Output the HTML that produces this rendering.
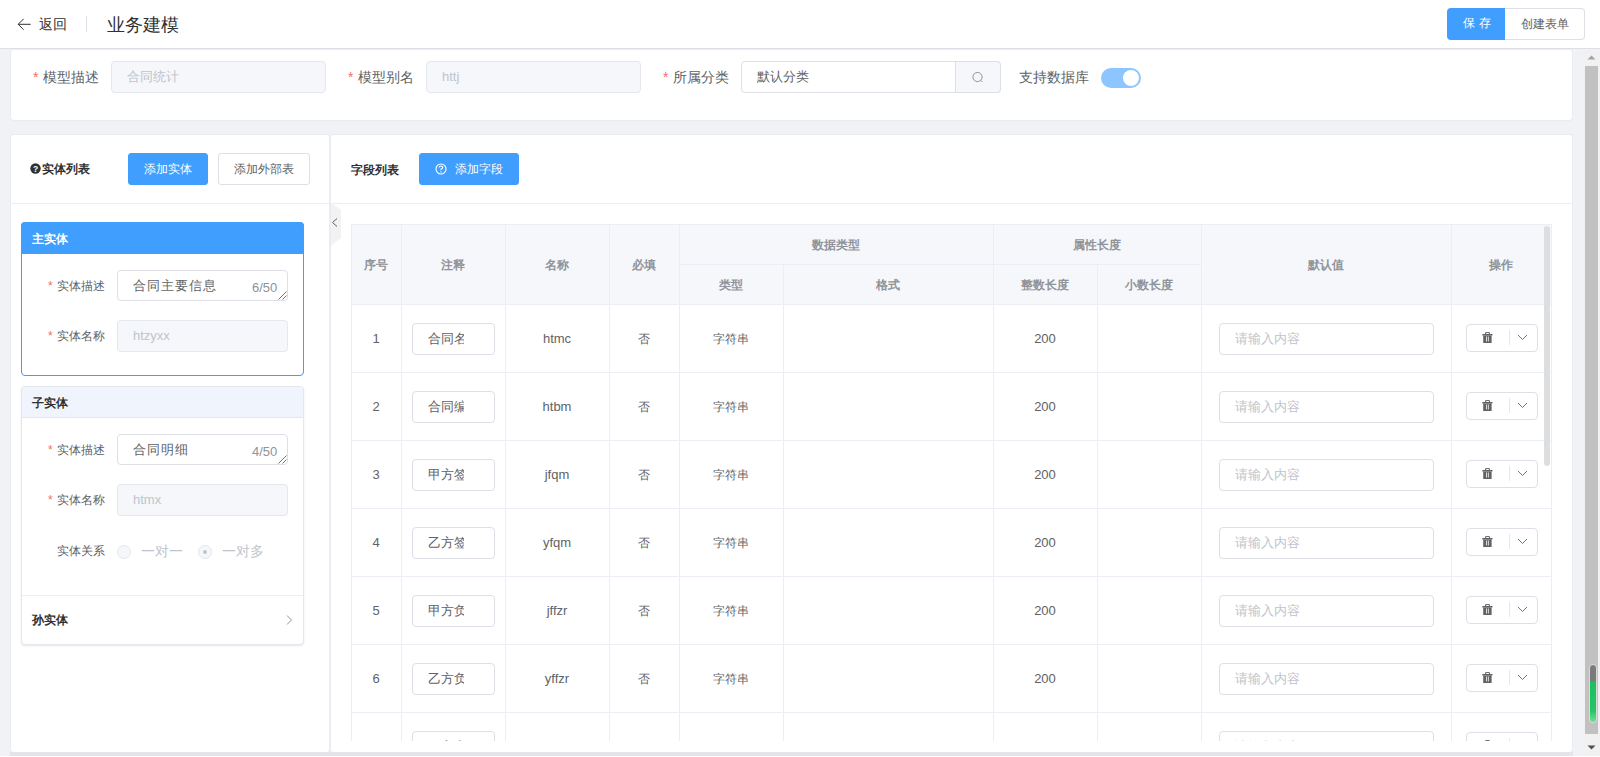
<!DOCTYPE html><html><head><meta charset="utf-8"><style>
*{box-sizing:border-box;margin:0;padding:0}
html,body{width:1600px;height:757px;overflow:hidden;background:#f0f2f5;font-family:"Liberation Sans",sans-serif;color:#606266}
.a{position:absolute}
.card{background:#fff;border-radius:3px;box-shadow:0 0 0 1px #e9ecf2}
.star{color:#f56c6c;font-size:14px;margin-right:5px}
.lbl{font-size:14px;color:#606266;white-space:nowrap;line-height:18px}
.lbs{font-size:12px;color:#606266;white-space:nowrap;line-height:16px}
.inp{border:1px solid #dcdfe6;border-radius:4px;background:#fff;height:32px;font-size:13px;line-height:30px;padding-left:15px;white-space:nowrap;overflow:hidden}
.dis{background:#f5f7fa;border-color:#e4e7ed;color:#c0c4cc}
.btn{border-radius:3px;font-size:12px;text-align:center;line-height:30px;height:32px;white-space:nowrap}
.bp{background:#409eff;color:#fff;border:1px solid #409eff}
.bd{background:#fff;color:#606266;border:1px solid #dcdfe6}
.vl{background:#ebeef5;width:1px}
.hl{background:#ebeef5;height:1px}
.th{font-size:12px;font-weight:bold;color:#909399;text-align:center;line-height:16px;white-space:nowrap}
.td{font-size:12px;color:#606266;text-align:center;line-height:16px;white-space:nowrap}
</style></head><body>
<div class="a" style="left:0;top:0;width:1600px;height:49px;background:#fff;border-bottom:1px solid #dcdfe6"></div>
<svg class="a" style="left:17px;top:18px" width="15" height="14" viewBox="0 0 15 14"><path d="M6.6 0.9L1.2 6.3L6.6 11.7M1.2 6.3H13.7" fill="none" stroke="#303133" stroke-width="1"/></svg>
<div class="a" style="left:39px;top:15px;font-size:14px;line-height:18px;color:#303133">返回</div>
<div class="a" style="left:86px;top:16px;width:1px;height:16px;background:#dcdfe6"></div>
<div class="a" style="left:107px;top:14px;font-size:18px;line-height:22px;color:#303133">业务建模</div>
<div class="a" style="left:1447px;top:8px;width:58px;height:32px;background:#409eff;border-radius:4px 0 0 4px;color:#fff;font-size:12px;line-height:31px;text-align:center;letter-spacing:4px;padding-left:5px">保存</div>
<div class="a" style="left:1505px;top:8px;width:80px;height:32px;background:#fff;border:1px solid #dcdfe6;border-left:none;border-radius:0 4px 4px 0;color:#606266;font-size:12px;line-height:30px;text-align:center">创建表单</div>
<div class="a card" style="left:11px;top:50px;width:1561px;height:70px"></div>
<div class="a lbl" style="left:33px;top:68px"><span class="star">*</span>模型描述</div>
<div class="a lbl" style="left:348px;top:68px"><span class="star">*</span>模型别名</div>
<div class="a lbl" style="left:663px;top:68px"><span class="star">*</span>所属分类</div>
<div class="a inp dis" style="left:111px;top:61px;width:215px">合同统计</div>
<div class="a inp dis" style="left:426px;top:61px;width:215px">httj</div>
<div class="a inp" style="left:741px;top:61px;width:260px;color:#606266">默认分类</div>
<div class="a" style="left:955px;top:61px;width:46px;height:32px;background:#f5f7fa;border:1px solid #dcdfe6;border-radius:0 4px 4px 0"></div>
<svg class="a" style="left:971px;top:71px" width="14" height="14" viewBox="0 0 14 14"><circle cx="6.5" cy="6" r="4.6" fill="none" stroke="#909399" stroke-width="1"/><path d="M9.8 9.3L11.5 11" stroke="#909399" stroke-width="1"/></svg>
<div class="a lbl" style="left:1019px;top:68px">支持数据库</div>
<div class="a" style="left:1101px;top:68px;width:40px;height:20px;border-radius:10px;background:#8cc5ff"></div>
<div class="a" style="left:1123px;top:70px;width:16px;height:16px;border-radius:8px;background:#fff"></div>
<div class="a card" style="left:11px;top:135px;width:318px;height:617px"></div>
<div class="a hl" style="left:11px;top:203px;width:318px"></div>
<svg class="a" style="left:30px;top:163px" width="11" height="11" viewBox="0 0 11 11"><circle cx="5.5" cy="5.5" r="5.2" fill="#303133"/><text x="5.5" y="9" font-size="8.5" font-weight="bold" text-anchor="middle" fill="#fff" font-family="Liberation Sans">?</text></svg>
<div class="a" style="left:42px;top:161px;font-size:12px;line-height:16px;font-weight:bold;color:#303133">实体列表</div>
<div class="a btn bp" style="left:128px;top:153px;width:80px">添加实体</div>
<div class="a btn bd" style="left:218px;top:153px;width:92px">添加外部表</div>
<div class="a" style="left:21px;top:222px;width:283px;height:154px;border:1px solid #409eff;border-radius:4px;background:#fff"></div>
<div class="a" style="left:21px;top:222px;width:283px;height:32px;background:#409eff;border-radius:4px 4px 0 0"></div>
<div class="a" style="left:32px;top:231px;font-size:12px;line-height:16px;font-weight:bold;color:#fff">主实体</div>
<div class="a lbs" style="left:48px;top:278px"><span class="star" style="font-size:12px;margin-right:4px">*</span>实体描述</div>
<div class="a inp" style="left:117px;top:270px;width:171px;height:31px;color:#606266;letter-spacing:1px">合同主要信息</div>
<div class="a" style="left:252px;top:280px;font-size:13px;line-height:16px;color:#909399">6/50</div>
<svg class="a" style="left:278px;top:291px" width="9" height="9" viewBox="0 0 9 9"><path d="M0.5 8.5L8.5 0.5M4.5 8.5L8.5 4.5" stroke="#606266" stroke-width="0.9"/></svg>
<div class="a lbs" style="left:48px;top:328px"><span class="star" style="font-size:12px;margin-right:4px">*</span>实体名称</div>
<div class="a inp dis" style="left:117px;top:320px;width:171px">htzyxx</div>
<div class="a" style="left:21px;top:386px;width:283px;height:259px;border:1px solid #e4e7ed;border-radius:4px;background:#fff;box-shadow:0 1px 2px rgba(0,0,0,.1)"></div>
<div class="a" style="left:22px;top:387px;width:281px;height:31px;background:#f0f4fc;border-bottom:1px solid #e4e7ed;border-radius:3px 3px 0 0"></div>
<div class="a" style="left:32px;top:395px;font-size:12px;line-height:16px;font-weight:bold;color:#303133">子实体</div>
<div class="a lbs" style="left:48px;top:442px"><span class="star" style="font-size:12px;margin-right:4px">*</span>实体描述</div>
<div class="a inp" style="left:117px;top:434px;width:171px;height:31px;color:#606266;letter-spacing:1px">合同明细</div>
<div class="a" style="left:252px;top:444px;font-size:13px;line-height:16px;color:#909399">4/50</div>
<svg class="a" style="left:278px;top:455px" width="9" height="9" viewBox="0 0 9 9"><path d="M0.5 8.5L8.5 0.5M4.5 8.5L8.5 4.5" stroke="#606266" stroke-width="0.9"/></svg>
<div class="a lbs" style="left:48px;top:492px"><span class="star" style="font-size:12px;margin-right:4px">*</span>实体名称</div>
<div class="a inp dis" style="left:117px;top:484px;width:171px">htmx</div>
<div class="a lbs" style="left:57px;top:543px">实体关系</div>
<div class="a" style="left:117px;top:545px;width:14px;height:14px;border-radius:7px;border:1px solid #e4e7ed;background:#f5f7fa"></div>
<div class="a lbs" style="left:141px;top:543px;color:#c0c4cc;font-size:14px">一对一</div>
<div class="a" style="left:198px;top:545px;width:14px;height:14px;border-radius:7px;border:1px solid #e4e7ed;background:#f5f7fa"></div>
<div class="a" style="left:203px;top:550px;width:4px;height:4px;border-radius:2px;background:#c0c4cc"></div>
<div class="a lbs" style="left:222px;top:543px;color:#c0c4cc;font-size:14px">一对多</div>
<div class="a hl" style="left:22px;top:595px;width:281px"></div>
<div class="a" style="left:32px;top:612px;font-size:12px;line-height:16px;font-weight:bold;color:#303133">孙实体</div>
<svg class="a" style="left:285px;top:614px" width="8" height="12" viewBox="0 0 8 12"><path d="M2 1.5L6.5 6L2 10.5" fill="none" stroke="#909399" stroke-width="1"/></svg>
<div class="a card" style="left:331px;top:135px;width:1241px;height:617px"></div>
<div class="a hl" style="left:331px;top:203px;width:1241px"></div>
<div class="a" style="left:351px;top:162px;font-size:12px;line-height:16px;font-weight:bold;color:#303133">字段列表</div>
<div class="a btn bp" style="left:419px;top:153px;width:100px;padding-left:20px">添加字段</div>
<svg class="a" style="left:435px;top:163px" width="12" height="12" viewBox="0 0 12 12"><circle cx="6" cy="6" r="5" fill="none" stroke="#fff" stroke-width="1.1"/><path d="M4.3 4.6Q4.3 3 6 3Q7.7 3 7.7 4.5Q7.7 5.5 6 6.2V7.2" fill="none" stroke="#fff" stroke-width="1.1"/><circle cx="6" cy="8.9" r=".7" fill="#fff"/></svg>
<svg class="a" style="left:331px;top:203px" width="11" height="43" viewBox="0 0 11 43"><path d="M0 0L10 7V35L0 42.5Z" fill="#f2f2f2"/><path d="M6 15.5L1.5 19.5L6 23.5" fill="none" stroke="#606266" stroke-width="1"/></svg>
<div class="a" style="left:351px;top:224px;width:1201px;height:517px;overflow:hidden">
<div class="a" style="left:0;top:0;width:1200px;height:80px;background:#f5f7fa"></div>
<div class="a hl" style="left:0;top:0;width:1200px"></div>
<div class="a hl" style="left:328px;top:40px;width:522px"></div>
<div class="a hl" style="left:0;top:80px;width:1200px"></div>
<div class="a hl" style="left:0;top:148px;width:1200px"></div>
<div class="a hl" style="left:0;top:216px;width:1200px"></div>
<div class="a hl" style="left:0;top:284px;width:1200px"></div>
<div class="a hl" style="left:0;top:352px;width:1200px"></div>
<div class="a hl" style="left:0;top:420px;width:1200px"></div>
<div class="a hl" style="left:0;top:488px;width:1200px"></div>
<div class="a hl" style="left:0;top:556px;width:1200px"></div>
<div class="a vl" style="left:0px;top:0;height:517px"></div>
<div class="a vl" style="left:50px;top:0;height:517px"></div>
<div class="a vl" style="left:154px;top:0;height:517px"></div>
<div class="a vl" style="left:258px;top:0;height:517px"></div>
<div class="a vl" style="left:328px;top:0;height:517px"></div>
<div class="a vl" style="left:432px;top:40px;height:477px"></div>
<div class="a vl" style="left:642px;top:0;height:517px"></div>
<div class="a vl" style="left:746px;top:40px;height:477px"></div>
<div class="a vl" style="left:850px;top:0;height:517px"></div>
<div class="a vl" style="left:1100px;top:0;height:517px"></div>
<div class="a vl" style="left:1200px;top:0;height:517px"></div>
<div class="a th" style="left:0px;top:33px;width:50px">序号</div>
<div class="a th" style="left:50px;top:33px;width:104px">注释</div>
<div class="a th" style="left:154px;top:33px;width:104px">名称</div>
<div class="a th" style="left:258px;top:33px;width:70px">必填</div>
<div class="a th" style="left:850px;top:33px;width:250px">默认值</div>
<div class="a th" style="left:1100px;top:33px;width:100px">操作</div>
<div class="a th" style="left:328px;top:13px;width:314px">数据类型</div>
<div class="a th" style="left:642px;top:13px;width:208px">属性长度</div>
<div class="a th" style="left:328px;top:53px;width:104px">类型</div>
<div class="a th" style="left:432px;top:53px;width:210px">格式</div>
<div class="a th" style="left:642px;top:53px;width:104px">整数长度</div>
<div class="a th" style="left:746px;top:53px;width:104px">小数长度</div>
<div class="a td" style="left:0px;top:107px;width:50px;font-size:13px">1</div>
<div class="a td" style="left:154px;top:107px;width:104px;font-size:13px">htmc</div>
<div class="a td" style="left:258px;top:107px;width:70px;font-size:12px">否</div>
<div class="a td" style="left:328px;top:107px;width:104px;font-size:12px">字符串</div>
<div class="a td" style="left:642px;top:107px;width:104px;font-size:13px">200</div>
<div class="a inp" style="left:61px;top:99px;width:83px;color:#606266;padding-right:0"><div style="width:36px;overflow:hidden">合同名称</div></div>
<div class="a inp" style="left:868px;top:99px;width:215px;color:#c0c4cc">请输入内容</div>
<div class="a" style="left:1115px;top:100px;width:72px;height:28px;border:1px solid #dcdfe6;border-radius:4px;background:#fff"></div>
<div class="a" style="left:1158px;top:106px;width:1px;height:15px;background:#e4e7ed"></div>
<svg class="a" style="left:1131px;top:108px" width="11" height="12" viewBox="0 0 11 12"><path d="M3.6 2.2V0.6H7.4V2.2" fill="none" stroke="#606266" stroke-width="1"/><rect x="0.3" y="2" width="10.2" height="1.5" fill="#606266"/><path d="M1.2 3.5H9.6V11H1.2Z" fill="#606266"/><rect x="4" y="4.5" width="0.9" height="5" fill="#e8e8ea"/><rect x="5.9" y="4.5" width="0.9" height="5" fill="#e8e8ea"/></svg>
<svg class="a" style="left:1166px;top:110px" width="11" height="7" viewBox="0 0 11 7"><path d="M1 1L5.5 5.5L10 1" fill="none" stroke="#606266" stroke-width="0.9"/></svg>
<div class="a td" style="left:0px;top:175px;width:50px;font-size:13px">2</div>
<div class="a td" style="left:154px;top:175px;width:104px;font-size:13px">htbm</div>
<div class="a td" style="left:258px;top:175px;width:70px;font-size:12px">否</div>
<div class="a td" style="left:328px;top:175px;width:104px;font-size:12px">字符串</div>
<div class="a td" style="left:642px;top:175px;width:104px;font-size:13px">200</div>
<div class="a inp" style="left:61px;top:167px;width:83px;color:#606266;padding-right:0"><div style="width:36px;overflow:hidden">合同编号</div></div>
<div class="a inp" style="left:868px;top:167px;width:215px;color:#c0c4cc">请输入内容</div>
<div class="a" style="left:1115px;top:168px;width:72px;height:28px;border:1px solid #dcdfe6;border-radius:4px;background:#fff"></div>
<div class="a" style="left:1158px;top:174px;width:1px;height:15px;background:#e4e7ed"></div>
<svg class="a" style="left:1131px;top:176px" width="11" height="12" viewBox="0 0 11 12"><path d="M3.6 2.2V0.6H7.4V2.2" fill="none" stroke="#606266" stroke-width="1"/><rect x="0.3" y="2" width="10.2" height="1.5" fill="#606266"/><path d="M1.2 3.5H9.6V11H1.2Z" fill="#606266"/><rect x="4" y="4.5" width="0.9" height="5" fill="#e8e8ea"/><rect x="5.9" y="4.5" width="0.9" height="5" fill="#e8e8ea"/></svg>
<svg class="a" style="left:1166px;top:178px" width="11" height="7" viewBox="0 0 11 7"><path d="M1 1L5.5 5.5L10 1" fill="none" stroke="#606266" stroke-width="0.9"/></svg>
<div class="a td" style="left:0px;top:243px;width:50px;font-size:13px">3</div>
<div class="a td" style="left:154px;top:243px;width:104px;font-size:13px">jfqm</div>
<div class="a td" style="left:258px;top:243px;width:70px;font-size:12px">否</div>
<div class="a td" style="left:328px;top:243px;width:104px;font-size:12px">字符串</div>
<div class="a td" style="left:642px;top:243px;width:104px;font-size:13px">200</div>
<div class="a inp" style="left:61px;top:235px;width:83px;color:#606266;padding-right:0"><div style="width:36px;overflow:hidden">甲方签订</div></div>
<div class="a inp" style="left:868px;top:235px;width:215px;color:#c0c4cc">请输入内容</div>
<div class="a" style="left:1115px;top:236px;width:72px;height:28px;border:1px solid #dcdfe6;border-radius:4px;background:#fff"></div>
<div class="a" style="left:1158px;top:242px;width:1px;height:15px;background:#e4e7ed"></div>
<svg class="a" style="left:1131px;top:244px" width="11" height="12" viewBox="0 0 11 12"><path d="M3.6 2.2V0.6H7.4V2.2" fill="none" stroke="#606266" stroke-width="1"/><rect x="0.3" y="2" width="10.2" height="1.5" fill="#606266"/><path d="M1.2 3.5H9.6V11H1.2Z" fill="#606266"/><rect x="4" y="4.5" width="0.9" height="5" fill="#e8e8ea"/><rect x="5.9" y="4.5" width="0.9" height="5" fill="#e8e8ea"/></svg>
<svg class="a" style="left:1166px;top:246px" width="11" height="7" viewBox="0 0 11 7"><path d="M1 1L5.5 5.5L10 1" fill="none" stroke="#606266" stroke-width="0.9"/></svg>
<div class="a td" style="left:0px;top:311px;width:50px;font-size:13px">4</div>
<div class="a td" style="left:154px;top:311px;width:104px;font-size:13px">yfqm</div>
<div class="a td" style="left:258px;top:311px;width:70px;font-size:12px">否</div>
<div class="a td" style="left:328px;top:311px;width:104px;font-size:12px">字符串</div>
<div class="a td" style="left:642px;top:311px;width:104px;font-size:13px">200</div>
<div class="a inp" style="left:61px;top:303px;width:83px;color:#606266;padding-right:0"><div style="width:36px;overflow:hidden">乙方签订</div></div>
<div class="a inp" style="left:868px;top:303px;width:215px;color:#c0c4cc">请输入内容</div>
<div class="a" style="left:1115px;top:304px;width:72px;height:28px;border:1px solid #dcdfe6;border-radius:4px;background:#fff"></div>
<div class="a" style="left:1158px;top:310px;width:1px;height:15px;background:#e4e7ed"></div>
<svg class="a" style="left:1131px;top:312px" width="11" height="12" viewBox="0 0 11 12"><path d="M3.6 2.2V0.6H7.4V2.2" fill="none" stroke="#606266" stroke-width="1"/><rect x="0.3" y="2" width="10.2" height="1.5" fill="#606266"/><path d="M1.2 3.5H9.6V11H1.2Z" fill="#606266"/><rect x="4" y="4.5" width="0.9" height="5" fill="#e8e8ea"/><rect x="5.9" y="4.5" width="0.9" height="5" fill="#e8e8ea"/></svg>
<svg class="a" style="left:1166px;top:314px" width="11" height="7" viewBox="0 0 11 7"><path d="M1 1L5.5 5.5L10 1" fill="none" stroke="#606266" stroke-width="0.9"/></svg>
<div class="a td" style="left:0px;top:379px;width:50px;font-size:13px">5</div>
<div class="a td" style="left:154px;top:379px;width:104px;font-size:13px">jffzr</div>
<div class="a td" style="left:258px;top:379px;width:70px;font-size:12px">否</div>
<div class="a td" style="left:328px;top:379px;width:104px;font-size:12px">字符串</div>
<div class="a td" style="left:642px;top:379px;width:104px;font-size:13px">200</div>
<div class="a inp" style="left:61px;top:371px;width:83px;color:#606266;padding-right:0"><div style="width:36px;overflow:hidden">甲方负责</div></div>
<div class="a inp" style="left:868px;top:371px;width:215px;color:#c0c4cc">请输入内容</div>
<div class="a" style="left:1115px;top:372px;width:72px;height:28px;border:1px solid #dcdfe6;border-radius:4px;background:#fff"></div>
<div class="a" style="left:1158px;top:378px;width:1px;height:15px;background:#e4e7ed"></div>
<svg class="a" style="left:1131px;top:380px" width="11" height="12" viewBox="0 0 11 12"><path d="M3.6 2.2V0.6H7.4V2.2" fill="none" stroke="#606266" stroke-width="1"/><rect x="0.3" y="2" width="10.2" height="1.5" fill="#606266"/><path d="M1.2 3.5H9.6V11H1.2Z" fill="#606266"/><rect x="4" y="4.5" width="0.9" height="5" fill="#e8e8ea"/><rect x="5.9" y="4.5" width="0.9" height="5" fill="#e8e8ea"/></svg>
<svg class="a" style="left:1166px;top:382px" width="11" height="7" viewBox="0 0 11 7"><path d="M1 1L5.5 5.5L10 1" fill="none" stroke="#606266" stroke-width="0.9"/></svg>
<div class="a td" style="left:0px;top:447px;width:50px;font-size:13px">6</div>
<div class="a td" style="left:154px;top:447px;width:104px;font-size:13px">yffzr</div>
<div class="a td" style="left:258px;top:447px;width:70px;font-size:12px">否</div>
<div class="a td" style="left:328px;top:447px;width:104px;font-size:12px">字符串</div>
<div class="a td" style="left:642px;top:447px;width:104px;font-size:13px">200</div>
<div class="a inp" style="left:61px;top:439px;width:83px;color:#606266;padding-right:0"><div style="width:36px;overflow:hidden">乙方负责</div></div>
<div class="a inp" style="left:868px;top:439px;width:215px;color:#c0c4cc">请输入内容</div>
<div class="a" style="left:1115px;top:440px;width:72px;height:28px;border:1px solid #dcdfe6;border-radius:4px;background:#fff"></div>
<div class="a" style="left:1158px;top:446px;width:1px;height:15px;background:#e4e7ed"></div>
<svg class="a" style="left:1131px;top:448px" width="11" height="12" viewBox="0 0 11 12"><path d="M3.6 2.2V0.6H7.4V2.2" fill="none" stroke="#606266" stroke-width="1"/><rect x="0.3" y="2" width="10.2" height="1.5" fill="#606266"/><path d="M1.2 3.5H9.6V11H1.2Z" fill="#606266"/><rect x="4" y="4.5" width="0.9" height="5" fill="#e8e8ea"/><rect x="5.9" y="4.5" width="0.9" height="5" fill="#e8e8ea"/></svg>
<svg class="a" style="left:1166px;top:450px" width="11" height="7" viewBox="0 0 11 7"><path d="M1 1L5.5 5.5L10 1" fill="none" stroke="#606266" stroke-width="0.9"/></svg>
<div class="a td" style="left:0px;top:515px;width:50px;font-size:13px">7</div>
<div class="a td" style="left:154px;top:515px;width:104px;font-size:13px">jfdh</div>
<div class="a td" style="left:258px;top:515px;width:70px;font-size:12px">否</div>
<div class="a td" style="left:328px;top:515px;width:104px;font-size:12px">字符串</div>
<div class="a td" style="left:642px;top:515px;width:104px;font-size:13px">200</div>
<div class="a inp" style="left:61px;top:507px;width:83px;color:#606266;padding-right:0"><div style="width:36px;overflow:hidden">甲方电话</div></div>
<div class="a inp" style="left:868px;top:507px;width:215px;color:#c0c4cc">请输入内容</div>
<div class="a" style="left:1115px;top:508px;width:72px;height:28px;border:1px solid #dcdfe6;border-radius:4px;background:#fff"></div>
<div class="a" style="left:1158px;top:514px;width:1px;height:15px;background:#e4e7ed"></div>
<svg class="a" style="left:1131px;top:516px" width="11" height="12" viewBox="0 0 11 12"><path d="M3.6 2.2V0.6H7.4V2.2" fill="none" stroke="#606266" stroke-width="1"/><rect x="0.3" y="2" width="10.2" height="1.5" fill="#606266"/><path d="M1.2 3.5H9.6V11H1.2Z" fill="#606266"/><rect x="4" y="4.5" width="0.9" height="5" fill="#e8e8ea"/><rect x="5.9" y="4.5" width="0.9" height="5" fill="#e8e8ea"/></svg>
<svg class="a" style="left:1166px;top:518px" width="11" height="7" viewBox="0 0 11 7"><path d="M1 1L5.5 5.5L10 1" fill="none" stroke="#606266" stroke-width="0.9"/></svg>
<div class="a" style="left:1193px;top:2px;width:6px;height:240px;border-radius:3px;background:#dddee0"></div>
</div>
<div class="a" style="left:10px;top:752px;width:1563px;height:4px;background:#e4e5e9"></div>
<div class="a" style="left:1583px;top:49px;width:17px;height:707px;background:#f1f1f1"></div>
<div class="a" style="left:1585px;top:66px;width:13px;height:668px;background:#c1c1c1"></div>
<svg class="a" style="left:1583px;top:52px" width="17" height="10" viewBox="0 0 17 10"><path d="M4.5 7.5L8.5 3.5L12.5 7.5Z" fill="#a3a3a3"/></svg>
<svg class="a" style="left:1583px;top:743px" width="17" height="10" viewBox="0 0 17 10"><path d="M4.5 2.5L8.5 6.5L12.5 2.5Z" fill="#505050"/></svg>
<div class="a" style="left:1589px;top:664px;width:8px;height:59px;border-radius:4px;background:linear-gradient(#7a7a7a 0,#7a7a7a 28%,#1fbf5f 30%,#25c466 80%,#6be38c 100%);border:1px solid #d9d9d9"></div>
<div class="a" style="left:0;top:756px;width:1600px;height:1px;background:#fff"></div>
</body></html>
